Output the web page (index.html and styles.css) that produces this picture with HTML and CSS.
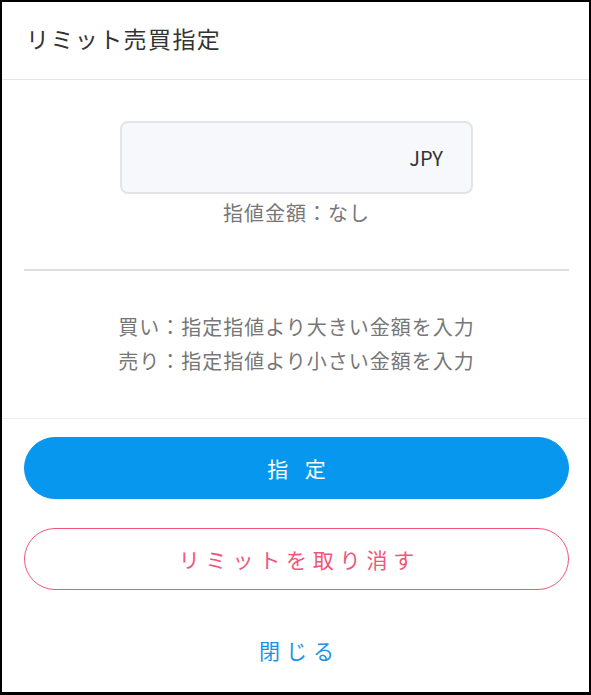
FILE: index.html
```html
<!DOCTYPE html>
<html lang="ja">
<head>
<meta charset="utf-8">
<title>リミット売買指定</title>
<link rel="stylesheet" href="styles.css">
</head>
<body>
<div class="dialog">
  <div class="header"><h1 class="title">リミット売買指定</h1></div>
  <div class="body">
    <div class="price-input"><span class="currency">JPY</span></div>
    <p class="caption">指値金額：なし</p>
    <hr class="rule">
    <p class="notes">買い：指定指値より大きい金額を入力<br>売り：指定指値より小さい金額を入力</p>
  </div>
  <div class="footer">
    <button class="btn btn-primary">指 定</button>
    <button class="btn btn-outline">リミットを取り消す</button>
    <button class="btn-close">閉じる</button>
  </div>
</div>
</body>
</html>
```
FILE: styles.css
```css
html, body {
  margin: 0;
  padding: 0;
  background: #fff;
}
body {
  font-family: "Noto Sans CJK JP", "Noto Sans", sans-serif;
}
.dialog {
  box-sizing: border-box;
  width: 591px;
  height: 695px;
  border: 2px solid #000;
  border-bottom-width: 3px;
  background: #fff;
  display: flex;
  flex-direction: column;
}
.header {
  box-sizing: border-box;
  height: 78px;
  padding: 0 0 6px 24px;
  border-bottom: 1px solid #e4e4e4;
  display: flex;
  align-items: center;
}
.title {
  margin: 0;
  font-size: 23px;
  font-weight: 400;
  color: #333;
  letter-spacing: 1.4px;
}
.body {
  padding: 41px 20px 40px 22px;
  border-bottom: 1px solid #eeeeee;
  display: flex;
  flex-direction: column;
  align-items: center;
}
.price-input {
  box-sizing: border-box;
  width: 353px;
  height: 73px;
  border: 2px solid #e2e4e9;
  border-radius: 8px;
  background: #f7f8fc;
  display: flex;
  align-items: center;
  justify-content: flex-end;
  padding-right: 28px;
}
.currency {
  font-size: 20px;
  color: #333;
}
.caption {
  margin: 4px 0 0;
  font-size: 20px;
  line-height: 30px;
  color: #777;
  letter-spacing: 1px;
}
.rule {
  align-self: stretch;
  margin: 41px 0 0;
  border: 0;
  height: 2px;
  background: #dedede;
}
.notes {
  margin: 39px 0 0;
  font-size: 20px;
  line-height: 34px;
  color: #777;
  text-align: center;
  letter-spacing: 1px;
}
.footer {
  padding: 18px 20px 0 22px;
  display: flex;
  flex-direction: column;
}
.btn {
  box-sizing: border-box;
  height: 62px;
  border-radius: 31px;
  font-family: inherit;
  font-size: 21px;
  letter-spacing: 5.8px;
  padding: 0 0 0 5.8px;
  cursor: pointer;
}
.btn-primary {
  background: #0897ee;
  border: 1px solid #0897ee;
  color: #fff;
}
.btn-outline {
  margin-top: 29px;
  background: #fff;
  border: 1px solid #f2557a;
  color: #f2557a;
}
.btn-close {
  margin-top: 40px;
  height: 40px;
  background: none;
  border: 0;
  font-family: inherit;
  font-size: 21px;
  letter-spacing: 6px;
  padding: 0 0 0 6px;
  color: #1a92e6;
  cursor: pointer;
}
```
